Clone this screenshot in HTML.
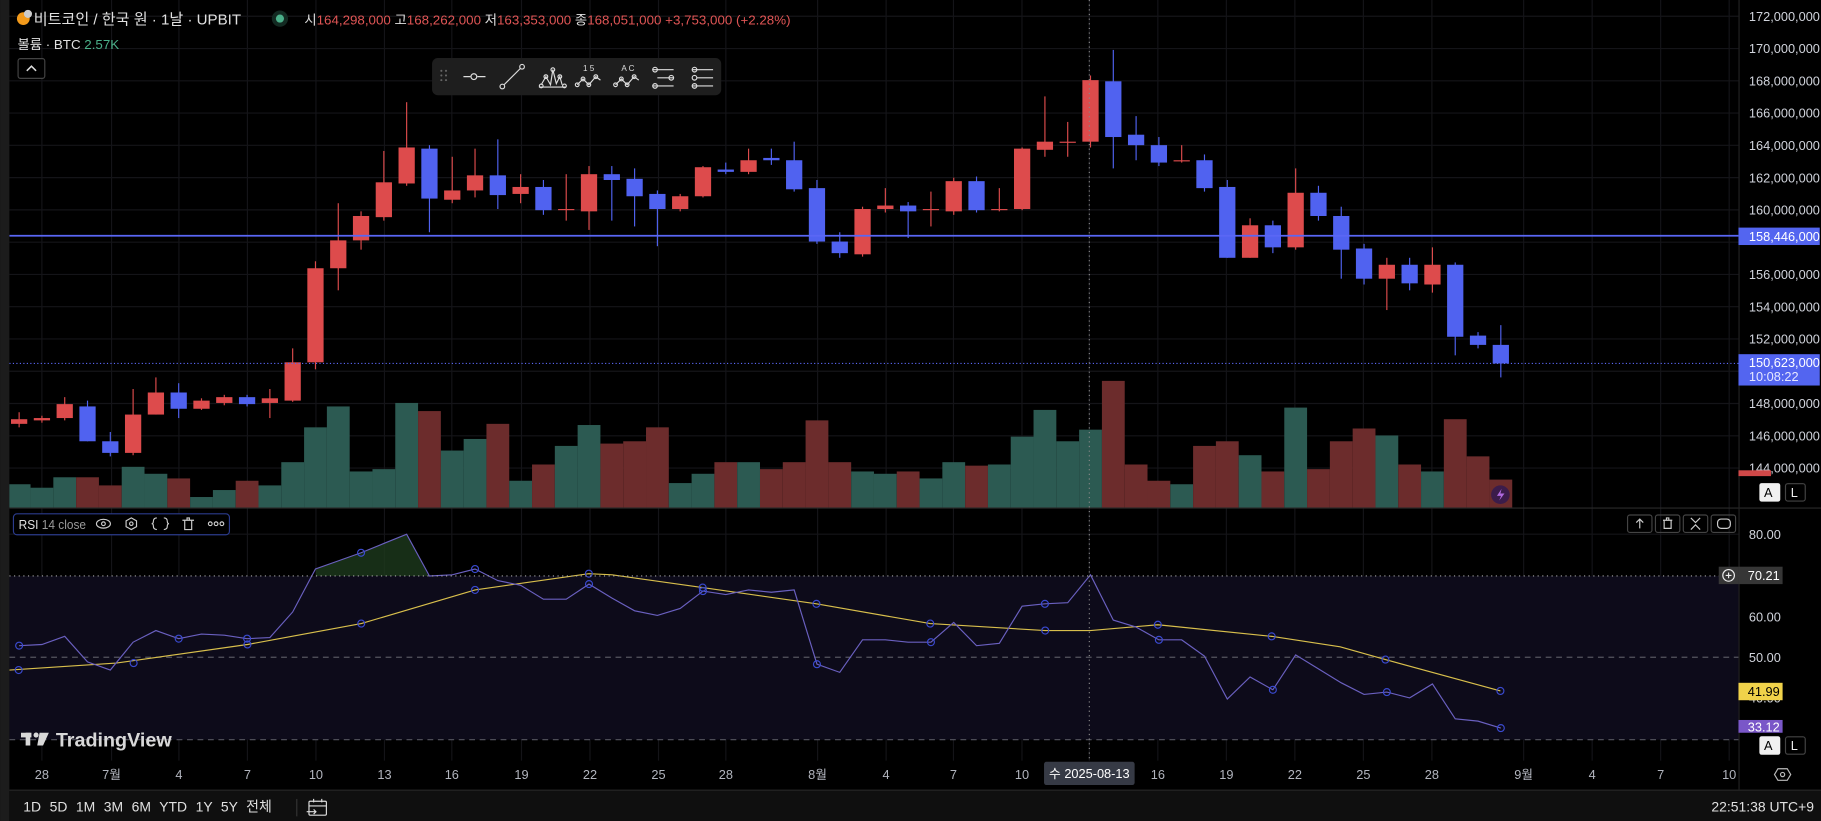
<!DOCTYPE html>
<html><head><meta charset="utf-8"><style>
html,body{margin:0;padding:0;background:#000;overflow:hidden;width:1821px;height:821px}
svg{display:block}
text{font-family:"Liberation Sans","Noto Sans CJK KR",sans-serif}
</style></head><body>
<svg id="s" width="1821" height="821" viewBox="0 0 1568 707" xmlns="http://www.w3.org/2000/svg">
<rect width="1568" height="707" fill="#000"/>
<g id="grid"></g>
<rect x="8" y="496" width="1489" height="141" fill="#0d0b1a"/>
<line x1="8" y1="566" x2="1497" y2="566" stroke="#55555f" stroke-dasharray="5,4" stroke-width="1"/>
<line x1="8" y1="637" x2="1497" y2="637" stroke="#55555f" stroke-dasharray="5,4" stroke-width="1"/>
<g id="vol"></g>
<g id="cand"></g>
<line x1="8" y1="203" x2="1497" y2="203" stroke="#5a67f5" stroke-width="1.5"/>
<line x1="8" y1="313" x2="1497" y2="313" stroke="#5a67f5" stroke-dasharray="1,2" stroke-width="1"/>
<g id="rsi"></g>
<line x1="8" y1="496" x2="1497" y2="496" stroke="#aaa" stroke-dasharray="1,3" stroke-width="1"/>
<line x1="938" y1="0" x2="938" y2="655" stroke="#888" stroke-dasharray="1,3" stroke-width="1"/>
<rect x="0" y="0" width="8" height="707" fill="#1c1c1c"/>
<line x1="8" y1="437.5" x2="1568" y2="437.5" stroke="#2a2a2a"/>
<line x1="1497.5" y1="0" x2="1497.5" y2="680" stroke="#222"/>
<rect x="8" y="681" width="1560" height="26" fill="#0f0f0f"/>
<line x1="8" y1="680.5" x2="1568" y2="680.5" stroke="#2a2a2a"/>
<circle cx="20" cy="16" r="5.5" fill="#f29a1b"/><circle cx="24" cy="12" r="3.5" fill="#ccc"/>
<text x="29" y="21" font-size="13" fill="#e0e0e0">비트코인 / 한국 원 · 1날 · UPBIT</text>
<circle cx="241" cy="16" r="7" fill="#132a22"/><circle cx="241" cy="16" r="3.5" fill="#4bb08a"/>
<text x="262" y="21" font-size="11.5" fill="#e0e0e0">시<tspan fill="#e05555">164,298,000</tspan> 고<tspan fill="#e05555">168,262,000</tspan> 저<tspan fill="#e05555">163,353,000</tspan> 종<tspan fill="#e05555">168,051,000</tspan> <tspan fill="#e05555">+3,753,000 (+2.28%)</tspan></text>
<text x="15" y="42" font-size="11.5" fill="#e0e0e0">볼륨 · BTC <tspan fill="#4bb08a">2.57K</tspan></text>
<rect x="15.5" y="50.5" width="23" height="17" rx="2" fill="#000" stroke="#444"/>
<path d="M23 61 L27 57 L31 61" stroke="#ddd" fill="none" stroke-width="1.3"/>
<rect x="372" y="50" width="249" height="32" rx="5" fill="#1e1e1e"/>
<g fill="#666"><circle cx="380" cy="61" r="0.9"/><circle cx="384" cy="61" r="0.9"/><circle cx="380" cy="65" r="0.9"/><circle cx="384" cy="65" r="0.9"/><circle cx="380" cy="69" r="0.9"/><circle cx="384" cy="69" r="0.9"/></g>
<g stroke="#ddd" fill="none" stroke-width="1">
<path d="M399 66 H405 M411 66 H418"/><circle cx="408" cy="66" r="2.5"/>
<path d="M434 73 L448 59"/><circle cx="432.5" cy="74.5" r="2"/><circle cx="449.5" cy="57.5" r="2"/>
<path d="M464 75 H487 M466 73 L470 66 L474 73 L476 60 L479 72 L482 66 L484 73"/><circle cx="470" cy="66" r="1.6"/><circle cx="476" cy="60" r="1.6"/><circle cx="482" cy="66" r="1.6"/><circle cx="466" cy="74" r="1.6"/><circle cx="486" cy="74" r="1.6"/>
<path d="M497 73 L502 68 L507 73 L513 66 L517 69"/><circle cx="497" cy="73" r="1.6"/><circle cx="502" cy="68" r="1.6"/><circle cx="507" cy="73" r="1.6"/><circle cx="513" cy="66" r="1.6"/>
<path d="M530 73 L535 68 L540 73 L546 66 L550 69"/><circle cx="530" cy="73" r="1.6"/><circle cx="535" cy="68" r="1.6"/><circle cx="540" cy="73" r="1.6"/><circle cx="546" cy="66" r="1.6"/>
<path d="M562 60 H580 M566 67 H580 M562 74 H580"/><circle cx="564" cy="60" r="2"/><circle cx="578" cy="67" r="2"/><circle cx="564" cy="74" r="2"/>
<path d="M596 60 H614 M600 67 H614 M596 74 H614"/><circle cx="598" cy="60" r="2"/><circle cx="598" cy="67" r="2"/><circle cx="598" cy="74" r="2"/>
</g>
<text x="502" y="61" font-size="7" fill="#ddd">1 5</text><text x="535" y="61" font-size="7" fill="#ddd">A C</text>
<g id="pax" font-size="11" fill="#d1d4dc"></g>
<rect x="1497" y="196" width="70" height="15" fill="#5365f0"/>
<text x="1506" y="207.5" font-size="11" fill="#fff">158,446,000</text>
<rect x="1497" y="305" width="70" height="27" fill="#5365f0"/>
<text x="1506" y="316" font-size="11" fill="#fff">150,623,000</text>
<text x="1506" y="328" font-size="11" fill="#e6e8ff">10:08:22</text>
<rect x="1497" y="405" width="28" height="5" fill="#d04848"/>
<rect x="1515" y="416" width="18" height="16" rx="2" fill="#f0f0f0"/><text x="1519" y="428" font-size="11" fill="#000">A</text>
<rect x="1537.5" y="416.5" width="17" height="15" rx="2" fill="#000" stroke="#444"/><text x="1542" y="428" font-size="11" fill="#eee">L</text>
<circle cx="1292" cy="426" r="8" fill="#3b1c4a"/><path d="M1293 421 L1289 427 H1292.5 L1291 431 L1295.5 425 H1292 Z" fill="#b06ae0"/>
<g font-size="11" fill="#d1d4dc"><text x="1506" y="464">80.00</text><text x="1506" y="535">60.00</text><text x="1506" y="570">50.00</text><text x="1506" y="605">40.00</text></g>
<rect x="1497" y="488" width="38" height="15" fill="#363636"/><text x="1505" y="499.5" font-size="11" fill="#fff">70.21</text>
<rect x="1480" y="488" width="17" height="15" fill="#363636"/><circle cx="1488.5" cy="495.5" r="5" fill="none" stroke="#eee"/><path d="M1486 495.5H1491M1488.5 493V498" stroke="#eee"/>
<rect x="1497" y="588" width="38" height="15" fill="#f0d24a"/><text x="1505" y="599.5" font-size="11" fill="#000">41.99</text>
<rect x="1497" y="620" width="38" height="11" fill="#7a57c8"/><text x="1505" y="630" font-size="11" fill="#fff">33.12</text>
<rect x="1515" y="634" width="18" height="16" rx="2" fill="#f0f0f0"/><text x="1519" y="646" font-size="11" fill="#000">A</text>
<rect x="1537.5" y="634.5" width="17" height="15" rx="2" fill="#000" stroke="#444"/><text x="1542" y="646" font-size="11" fill="#eee">L</text>
<g stroke="#ccc" fill="none" stroke-width="1">
<rect x="1401.5" y="443.5" width="21" height="15" rx="2" stroke="#444"/><path d="M1412 455V447M1409 450L1412 447L1415 450"/>
<rect x="1425.5" y="443.5" width="21" height="15" rx="2" stroke="#444"/><path d="M1432 448H1440M1433 448V455H1439V448M1435 448V446H1437V448"/>
<rect x="1449.5" y="443.5" width="21" height="15" rx="2" stroke="#444"/><path d="M1456 446L1460 450L1464 446M1456 456L1460 452L1464 456"/>
<rect x="1473.5" y="443.5" width="21" height="15" rx="2" stroke="#444"/><rect x="1479" y="447" width="11" height="8" rx="3"/>
</g>
<rect x="11.5" y="442.5" width="186" height="18" rx="3" fill="#000" stroke="#2b3b8c"/>
<text x="16" y="455.5" font-size="11" fill="#e0e0e0" textLength="58" lengthAdjust="spacingAndGlyphs">RSI <tspan fill="#9a9a9a">14 close</tspan></text>
<g stroke="#ccc" fill="none" stroke-width="1">
<ellipse cx="89" cy="451" rx="6" ry="3.8"/><circle cx="89" cy="451" r="1.6"/>
<path d="M113 446L117.5 448.5V453.5L113 456L108.5 453.5V448.5Z"/><circle cx="113" cy="451" r="1.5"/>
<path d="M135 446Q132 446 132 449Q132 451 130.5 451Q132 451 132 453Q132 456 135 456M141 446Q144 446 144 449Q144 451 145.5 451Q144 451 144 453Q144 456 141 456"/>
<path d="M157 448H167M159 448V456H165V448M161 448V446H163V448"/>
</g>
<g><circle cx="181" cy="451" r="1.6" fill="none" stroke="#ccc"/><circle cx="186" cy="451" r="1.6" fill="none" stroke="#ccc"/><circle cx="191" cy="451" r="1.6" fill="none" stroke="#ccc"/></g>
<g fill="#d8d8d8"><rect x="18" y="631" width="9" height="4"/><rect x="22" y="631" width="4" height="11"/><circle cx="31" cy="633" r="2.2"/><path d="M34 631H42L37 642H32Z"/></g>
<text x="48" y="643" font-size="17" font-weight="bold" fill="#d8d8d8">TradingView</text>
<g id="tax" font-size="11" fill="#b2b5be" text-anchor="middle"></g>
<rect x="899" y="656" width="78" height="20" rx="2" fill="#363a45"/>
<text x="938" y="670" font-size="11" fill="#fff" text-anchor="middle">수 2025-08-13</text>
<path d="M1528 667L1531 662H1539L1542 667L1539 672H1531Z" stroke="#bbb" fill="none"/><circle cx="1535" cy="667" r="1.8" stroke="#bbb" fill="none"/>
<text x="20" y="699" font-size="12" fill="#e0e0e0" word-spacing="4">1D  5D  1M  3M  6M  YTD  1Y  5Y  전체</text>
<line x1="255.5" y1="688" x2="255.5" y2="703" stroke="#333"/>
<g stroke="#ddd" fill="none"><rect x="266" y="690" width="15" height="12" rx="1"/><path d="M266 694H281M270 688V691M277 688V691M264 699H272M270 697L272 699L270 701"/></g>
<text x="1562" y="699" font-size="12" fill="#e0e0e0" text-anchor="end">22:51:38 UTC+9</text>
<script>
var NS="http://www.w3.org/2000/svg";
function el(p,t,a){var e=document.createElementNS(NS,t);for(var k in a)e.setAttribute(k,a[k]);document.getElementById(p).appendChild(e);return e;}
var tx=[36,96,154,213,272,331,389,449,508,567,625,704,763,821,880,938,997,1056,1115,1174,1233,1312,1371,1430,1489];
var tl=["28","7월","4","7","10","13","16","19","22","25","28","8월","4","7","10","","16","19","22","25","28","9월","4","7","10"];
tx.forEach(function(x,i){el("grid","line",{x1:x,y1:0,x2:x,y2:655,stroke:"#141418"});var t=el("tax","text",{x:x,y:671});t.textContent=tl[i];});
for(var k=0;k<15;k++){var y=14+k*27.79;el("grid","line",{x1:8,y1:y,x2:1497,y2:y,stroke:"#141418"});
 var v=172-2*k; if(v!==158){var t=el("pax","text",{x:1506,y:y+4});t.textContent=v+",000,000";}}
[460,531,601].forEach(function(y){el("grid","line",{x1:8,y1:y,x2:1497,y2:y,stroke:"#141418"});});
var C=[[361,365,355,368,'r'],[360,362,358,364,'r'],[348,360,342,362,'r'],[350,380,345,380,'b'],[380,390,372,393,'b'],[357,390,335,392,'r'],[338,357,325,357,'r'],[338,352,330,360,'b'],[345,352,343,353,'r'],[342,347,340,349,'r'],[342,348,340,350,'b'],[343,347,335,360,'r'],[312,345,300,346,'r'],[231,312,225,318,'r'],[207,231,175,250,'r'],[186,207,182,215,'r'],[157,187,130,190,'r'],[127,158,88,160,'r'],[128,171,125,200,'b'],[164,172,135,175,'r'],[151,164,128,170,'r'],[151,168,120,180,'b'],[161,167,150,175,'r'],[161,181,155,185,'b'],[180,181,150,190,'r'],[150,182,143,198,'r'],[150,155,143,190,'b'],[154,169,145,195,'b'],[167,180,164,212,'b'],[169,180,167,182,'r'],[144,169,143,170,'r'],[146,148,140,150,'b'],[138,148,128,150,'r'],[136,138,128,142,'b'],[138,163,122,165,'b'],[162,208,155,210,'b'],[208,218,200,222,'b'],[180,219,178,221,'r'],[177,180,162,183,'r'],[177,182,174,205,'b'],[180,181,165,195,'r'],[156,182,153,185,'r'],[156,181,152,183,'b'],[180,181,162,182,'r'],[128,180,127,181,'r'],[122,129,83,135,'r'],[122,123,105,135,'r'],[69,122,65,127,'r'],[70,118,43,145,'b'],[116,125,100,138,'b'],[125,140,118,143,'b'],[138,139,125,140,'r'],[138,162,133,165,'b'],[161,222,155,222,'b'],[194,222,188,222,'r'],[194,213,190,218,'b'],[166,213,145,215,'r'],[166,186,160,190,'b'],[186,215,178,240,'b'],[214,240,210,245,'b'],[228,240,222,267,'r'],[228,244,222,250,'b'],[228,245,213,252,'r'],[228,290,226,306,'b'],[289,297,286,300,'b'],[297,313,280,325,'b']];
var V=[417,420,411,411,418,402,408,412,428,422,414,418,398,368,350,406,404,347,354,388,378,365,414,400,384,366,382,380,368,416,408,398,398,404,398,362,398,406,408,406,412,398,401,400,376,353,380,370,328,400,414,417,384,380,392,406,351,404,380,369,375,400,406,361,393,413];
C.forEach(function(c,i){var x=16.4+i*19.63;var col=c[4]=='r'?'#dd4b4c':'#5062f0';
 el("vol","rect",{x:x-9.8,y:V[i],width:19.63,height:437-V[i],fill:c[4]=='r'?'#2c5a52':'#6c2c2c'});
 el("cand","line",{x1:x,y1:c[2],x2:x,y2:c[3],stroke:col,"stroke-width":1});
 el("cand","rect",{x:x-7,y:c[0],width:14,height:Math.max(1,c[1]-c[0]),fill:col});});
var R=[556,555,548,570,577,553,543,550,546,547,550,549,527,490,483,476,468,460,496,495,490,500,504,516,516,503,515,526,530,524,509,512,508,510,508,572,579,551,551,553,553,536,556,554,522,520,519,495,534,540,551,551,565,602,583,594,564,576,588,598,596,601,589,619,621,627];
var pts=R.map(function(y,i){return [16.4+i*19.63,y];});
el("rsi","path",{d:"M272,496 L272,490 L291,483 L311,476 L330,468 L350,460 L369,496 Z",fill:"#1d3a1d",opacity:"0.8"});
var M=[[8,577],[100,571],[213,555],[311,537],[409,508],[507,494],[527,495],[605,506],[703,520],[801,537],[900,543],[939,543],[997,538],[1095,548],[1154,557],[1193,568],[1292,595]];
el("rsi","polyline",{points:M.map(function(p){return p.join(",")}).join(" "),fill:"none",stroke:"#d8bf4c","stroke-width":1});
el("rsi","polyline",{points:pts.map(function(p){return p.join(",")}).join(" "),fill:"none",stroke:"#6a60c0","stroke-width":1});
[0,7,10,15,20,25,30,35,40,45,50,55,60,65].forEach(function(i){var p=pts[i];el("rsi","circle",{cx:p[0],cy:p[1],r:3,fill:"none",stroke:"#3a4ad0","stroke-width":1});});
[[16,577],[115,571],[213,555],[311,537],[409,508],[507,494],[605,506],[703,520],[801,537],[900,543],[997,538],[1095,548],[1193,568],[1292,595]].forEach(function(p){el("rsi","circle",{cx:p[0],cy:p[1],r:3,fill:"none",stroke:"#3a4ad0","stroke-width":1});});
</script>
</svg>
</body></html>
